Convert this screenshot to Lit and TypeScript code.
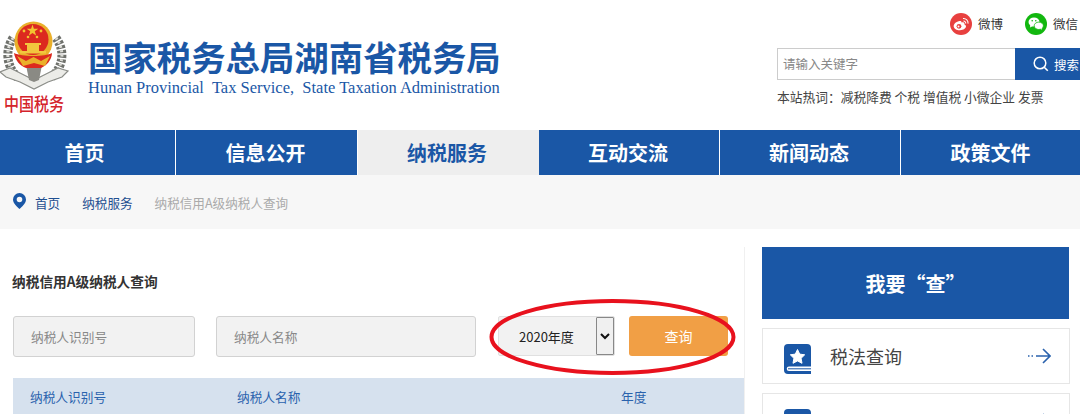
import { LitElement, html, css } from "lit";
import { customElement } from "lit/decorators.js";

const NAV = ["首页", "信息公开", "纳税服务", "互动交流", "新闻动态", "政策文件"];

@customElement("app-root")
export class AppRoot extends LitElement {
  static styles = css`
    :host { display: block; position: relative; width: 1080px; height: 414px; overflow: hidden; background: #fff;
      font-family: "Liberation Sans", "Noto Sans CJK SC", sans-serif; color: #333; }
    * { box-sizing: border-box; }
    .header { height: 130px; display: flex; }
    .logo { width: 88px; flex: none; padding-top: 20px; display: flex; flex-direction: column; }
    .logo svg { display: block; }
    .cn { font-family: "Noto Sans CJK SC", sans-serif; font-size: 15px; line-height: 16px; font-weight: 500; color: #d4232b; margin-top: 2px; padding-left: 4px; white-space: nowrap; transform: scaleY(1.2); transform-origin: top left; }
    .title { flex: none; width: 689px; padding-top: 37px; color: #1a57a6; }
    .title h1 { margin: 0; font-family: "Noto Sans CJK SC", sans-serif; font-size: 34.4px; line-height: 38px; font-weight: 700; white-space: nowrap; }
    .title p { margin: 4px 0 0; font-family: "Liberation Serif", serif; font-size: 16.5px; line-height: 18px; white-space: pre; }
    .side { flex: 1; min-width: 0; }
    .social { height: 48px; padding-top: 12px; display: flex; justify-content: flex-end; }
    .soc { display: flex; align-items: center; height: 23px; gap: 6px; white-space: nowrap; font-family: "Noto Sans CJK SC", sans-serif; font-size: 12.5px; color: #333; }
    .soc.a { width: 75px; }
    .soc.b { width: 55px; }
    .soc svg { flex: none; }
    .search { display: flex; height: 33px; }
    .search .in { width: 238px; height: 32px; border: 1px solid #ccc; border-right: none; font-size: 12.5px; line-height: 30px; color: #888; padding-left: 5px; font-family: "Noto Sans CJK SC", sans-serif; }
    .search .go { flex: 1; height: 32px; background: #1a57a6; color: #fff; display: flex; align-items: center; padding-left: 18px; gap: 5px; font-size: 12.5px; font-family: "Noto Sans CJK SC", sans-serif; white-space: nowrap; overflow: hidden; }
    .hot { margin-top: 7px; font-size: 12.75px; line-height: 18px; color: #444; white-space: pre; font-family: "Noto Sans CJK SC", sans-serif; }
    .nav { height: 45px; display: grid; grid-template-columns: 176px 182px 181px 181px 181px 179px; background: #fff; }
    .nav a { background: #1a57a6; color: #fff; font-size: 20px; font-weight: 700; font-family: "Noto Sans CJK SC", sans-serif; display: flex; align-items: center; justify-content: center; border-right: 1px solid #fff; padding-right: 2px; }
    .nav a:first-child { padding-right: 6px; }
    .nav a:last-child { border-right: none; padding-right: 0; }
    .nav a.on { background: #eee; color: #1a57a6; border-right: none; padding-right: 3px; }
    .crumb { height: 54px; background: #f7f7f7; display: flex; align-items: center; padding-left: 13px; font-size: 12.6px; font-family: "Noto Sans CJK SC", sans-serif; color: #1f4f91; }
    .crumb svg { margin-right: 9px; margin-top: -2px; }
    .crumb span { margin-right: 22px; }
    .crumb span.last { color: #aaa; }
    .main { display: flex; height: 185px; }
    .left { width: 745px; flex: none; padding-left: 13px; border-right: 1px solid #f0f0f0; margin-top: 18px; }
    .left h2 { margin: 0 0 0 -1px; padding-top: 24px; height: 69px; font-size: 13.7px; line-height: 20px; font-weight: 700; color: #333; font-family: "Noto Sans CJK SC", sans-serif; }
    .form { display: flex; height: 62px; }
    .field { height: 41px; background: #f2f2f2; border: 1px solid #d2d2d2; border-radius: 3px; font-size: 12.7px; color: #888; display: flex; align-items: center; padding-left: 17px; font-family: "Noto Sans CJK SC", sans-serif; }
    .f1 { width: 182px; margin-right: 21px; }
    .f2 { width: 260px; margin-right: 22px; }
    .sel { width: 117px; height: 40px; display: flex; background: #f2f2f2; border: 1px solid #e0e0e0; border-radius: 2px; font-size: 13px; color: #222; margin-right: 14px; font-family: "Noto Sans CJK SC", sans-serif; }
    .sel .v { flex: 1; display: flex; align-items: center; padding-left: 20px; white-space: nowrap; }
    .sel .arr { width: 18px; flex: none; border: 1px solid #888; border-radius: 1px; background: #f0f0f0; display: flex; align-items: center; justify-content: center; }
    .btn { width: 99px; height: 40px; background: #f19f45; border-radius: 3px; color: #fff; font-size: 14px; display: flex; align-items: center; justify-content: center; font-family: "Noto Sans CJK SC", sans-serif; }
    .thead { height: 36px; background: #d6e1ee; display: flex; align-items: center; width: 731px; font-size: 12.7px; color: #2a62ad; font-family: "Noto Sans CJK SC", sans-serif; }
    .thead span:nth-child(1) { width: 224px; padding-left: 17px; }
    .thead span:nth-child(2) { width: 384px; }
    .right { flex: 1; padding: 18px 0 0 17px; }
    .cta { width: 307px; height: 72px; background: #1a57a6; color: #fff; font-size: 20px; font-weight: 700; display: flex; align-items: center; justify-content: center; font-family: "Noto Sans CJK SC", sans-serif; }
    .card { width: 308px; height: 56px; margin-top: 9px; border: 1px solid #e6e6e6; display: flex; align-items: center; padding-left: 21px; font-size: 18px; color: #444; font-family: "Noto Sans CJK SC", sans-serif; }
    .card svg.bk { margin-top: 6px; flex: none; }
    .card .t { margin-left: 19px; flex: 1; white-space: nowrap; }
    .card .t.low { margin-top: 4px; }
    .card .ar { margin-right: 18px; flex: none; }
    .ring { position: absolute; left: 0; top: 0; pointer-events: none; }
  `;

  private book() {
    return html`<svg class="bk" width="27" height="30" viewBox="0 0 27 30">
      <path d="M4 0H23a4 4 0 0 1 4 4V30H4a4 4 0 0 1-4-4V4a4 4 0 0 1 4-4Z" fill="#1a57a6"/>
      <path d="M27 22.500H5a2.200 2.200 0 0 0 0 4.500H27" fill="#fff"/><rect x="4" y="24.300" width="23" height="1" fill="#1a57a6"/>
      <path d="M13.500 5.500l2.200 4.600 5 .7-3.600 3.500.9 5-4.500-2.400-4.500 2.400.9-5-3.600-3.500 5-.7Z" fill="#fff" stroke="#fff" stroke-width="1" stroke-linejoin="round"/>
    </svg>`;
  }

  private arrow() {
    return html`<svg class="ar" width="24" height="16" viewBox="0 0 24 16"><path d="M9 8H23M16 1l7 7-7 7" fill="none" stroke="#2a62ad" stroke-width="1.600"/><path d="M1 8h1.500M4.500 8H6" stroke="#2a62ad" stroke-width="1.400"/></svg>`;
  }

  render() {
    return html`
      <div class="header">
        <div class="logo">
          <svg width="72" height="72" viewBox="0 0 72 72">
            <path d="M13 18C5 30 6 46 18 58M56 18C65 30 64 46 51 58" fill="none" stroke="#6f716c" stroke-width="9" stroke-dasharray="3 1.500"/>
            <path d="M13 18C5 30 6 46 18 58M56 18C65 30 64 46 51 58" fill="none" stroke="#dcdcd6" stroke-width="3" stroke-dasharray="2 2.500"/>
            <path d="M0 52L10 48 20 53 34 60 48 53 58 48 68 51 62 57 48 62 34 69 20 62 6 57Z" fill="#ecece8" stroke="#8b8d88" stroke-width="1.200"/>
            <path d="M26 45H42L39 60 34 62 29 60Z" fill="#8a8a84"/>
            <ellipse cx="33.500" cy="21.500" rx="19" ry="20" fill="#eab02b"/>
            <ellipse cx="33" cy="19.500" rx="15.500" ry="15.500" fill="#dc2a1f"/>
            <path d="M32.500 4.500l1.400 4.200h4.400l-3.500 2.600 1.300 4.200-3.600-2.600-3.600 2.600 1.300-4.200-3.500-2.600h4.400Z" fill="#f3c530"/>
            <circle cx="24" cy="11" r="1.400" fill="#f3c530"/><circle cx="41" cy="11" r="1.400" fill="#f3c530"/><circle cx="28" cy="17" r="1.300" fill="#f3c530"/><circle cx="37" cy="17" r="1.300" fill="#f3c530"/>
            <path d="M25 23h16v2H25zM27 25h12v6H27zM20 31h26v2.500H20z" fill="#f2c63e"/>
            <path d="M14 33C22 37 45 37 52 33C52 40 46 46 41 48H26C20 46 15 40 14 33Z" fill="#dc2a1f"/>
            <path d="M17 36L26 41 33.500 37 41 41 50 36 45 46 34 43 23 46Z" fill="#eab02b"/>
          </svg>
          <div class="cn">中国税务</div>
        </div>
        <div class="title">
          <h1>国家税务总局湖南省税务局</h1>
          <p>Hunan Provincial  Tax Service,  State Taxation Administration</p>
        </div>
        <div class="side">
          <div class="social">
            <div class="soc a">
              <svg width="22" height="22" viewBox="0 0 22 22"><circle cx="11" cy="11" r="11" fill="#e8403f"/>
                <path d="M9.300 8C5.500 8.800 3.500 11.500 3.700 13.500 4 16 7 17.500 10 17.300 13.500 17 16 15.300 16 13.300 16 11.800 14.500 11.600 14.300 11.200 14.800 9.800 13.800 8.800 11.500 9.600 11.800 8.200 10.800 7.700 9.300 8Z" fill="#fff"/>
                <circle cx="9" cy="13.300" r="2.400" fill="#e8403f"/><circle cx="8.500" cy="13.500" r="1" fill="#fff"/>
                <path d="M13 5.500a4.500 4.500 0 0 1 5 5.200M13.500 8a2.200 2.200 0 0 1 2.200 2.500" fill="none" stroke="#fff" stroke-width="1.100"/></svg>
              <span>微博</span>
            </div>
            <div class="soc b">
              <svg width="22" height="22" viewBox="0 0 22 22"><circle cx="11" cy="11" r="11" fill="#12b70f"/>
                <ellipse cx="9" cy="9" rx="5.500" ry="4.500" fill="#fff"/><path d="M5.500 11.500L5 14.500 8 13Z" fill="#fff"/>
                <circle cx="7.200" cy="7.800" r=".8" fill="#12b70f"/><circle cx="10.800" cy="7.800" r=".8" fill="#12b70f"/>
                <ellipse cx="13.800" cy="12.800" rx="4.600" ry="3.700" fill="#fff" stroke="#12b70f" stroke-width=".8"/><path d="M16 15.500l1 1.700-.1-2.500Z" fill="#fff"/></svg>
              <span>微信</span>
            </div>
          </div>
          <div class="search">
            <div class="in">请输入关键字</div>
            <div class="go">
              <svg width="16" height="16" viewBox="0 0 16 16"><circle cx="7" cy="7" r="5.800" fill="none" stroke="#fff" stroke-width="1.500"/><path d="M11.200 11.200L14.800 14.800" stroke="#fff" stroke-width="1.600"/></svg>
              <span>搜索</span>
            </div>
          </div>
          <div class="hot">本站热词：减税降费 个税 增值税 小微企业 发票</div>
        </div>
      </div>
      <div class="nav">${NAV.map((n, i) => html`<a class=${i === 2 ? "on" : ""}>${n}</a>`)}</div>
      <div class="crumb">
        <svg width="13" height="16" viewBox="0 0 13 16"><path fill-rule="evenodd" d="M6.500 0A6.500 6.500 0 0 1 13 6.500C13 10.500 8.500 14 6.500 16 4.500 14 0 10.500 0 6.500A6.500 6.500 0 0 1 6.500 0ZM6.500 3.700a2.800 2.800 0 1 0 0 5.600 2.800 2.800 0 0 0 0-5.600Z" fill="#1a57a6"/></svg>
        <span>首页</span><span>纳税服务</span><span class="last">纳税信用A级纳税人查询</span>
      </div>
      <div class="main">
        <div class="left">
          <h2>纳税信用A级纳税人查询</h2>
          <div class="form">
            <div class="field f1">纳税人识别号</div>
            <div class="field f2">纳税人名称</div>
            <div class="sel"><div class="v">2020年度</div><div class="arr"><svg width="10" height="7" viewBox="0 0 10 7"><path d="M1 1l4 4 4-4" fill="none" stroke="#111" stroke-width="2"/></svg></div></div>
            <div class="btn">查询</div>
          </div>
          <div class="thead"><span>纳税人识别号</span><span>纳税人名称</span><span>年度</span></div>
        </div>
        <div class="right">
          <div class="cta">我要“查”</div>
          <div class="card">${this.book()}<span class="t">税法查询</span>${this.arrow()}</div>
          <div class="card">${this.book()}<span class="t low">纳税信用查询</span>${this.arrow()}</div>
        </div>
      </div>
      <svg class="ring" width="1080" height="414"><ellipse cx="612.500" cy="337" rx="121" ry="36" fill="none" stroke="#e8111d" stroke-width="4"/></svg>
    `;
  }
}
